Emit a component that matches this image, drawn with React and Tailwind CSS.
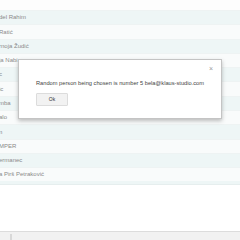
import React from "react";

const rows = [
  { t: "del Rahim", h: "h-[14px]", s: true },
  { t: "Ratić", h: "h-[15px]", s: false },
  { t: "rnoja Žudić", h: "h-[14px]", s: true },
  { t: "ja Nabi", h: "h-[14px]", s: false },
  { t: "c", h: "h-[14px]", s: true },
  { t: "ic", h: "h-[15px]", s: false },
  { t: "mba", h: "h-[14px]", s: true },
  { t: "alo", h: "h-[14px]", s: false },
  { t: "n", h: "h-[15px]", s: true },
  { t: "MPER", h: "h-[14px]", s: false },
  { t: "ermanec", h: "h-[14px]", s: true },
  { t: "a Pirš Petraković", h: "h-[14px]", s: false },
];

export default function App() {
  return (
    <div className="relative w-[240px] h-[240px] overflow-hidden bg-white flex flex-col" style={{ fontFamily: '"Liberation Sans", Arial, sans-serif' }}>
      <div className="h-[10px] bg-[#fdfdfd] shrink-0" />
      {rows.map((r, i) => (
        <div
          key={i}
          className={`${r.h} shrink-0 flex items-center text-[6px] text-[#8a8a8a] whitespace-nowrap border-t border-[#eef3f3] ${r.s ? "bg-[#eef6f6]" : "bg-[#f9fbfb]"}`}
        >
          <span className="-ml-[1px]">{r.t}</span>
        </div>
      ))}
      <div className="h-[4px] shrink-0 bg-[#eef6f6] border-b border-[#e6eeee]" />
      <div className="flex-1 bg-white" />
      <div className="h-[9px] shrink-0 bg-[#f1f1f1] border-t border-[#dcdcdc] flex items-end pl-[10px]">
        <div className="w-[2px] h-[6px] bg-[#d8d8d8]" />
      </div>

      <div className="absolute left-[18px] top-[59px] w-[204px] h-[60px] bg-white border border-[#c4c4c4] shadow-[0_2px_4px_rgba(0,0,0,0.25)]">
        <div className="absolute right-[8px] top-[5px] text-[7px] leading-none text-[#9a9a9a]">×</div>
        <div className="absolute left-[17px] top-[21px] text-[5.7px] leading-none text-[#444] whitespace-nowrap">
          Random person being chosen is number 5 bela@klaus-studio.com
        </div>
        <div className="absolute left-[17px] top-[33px] w-[32px] h-[13px] bg-[#f2f2f2] border border-[#dcdcdc] rounded-[1px] flex items-center justify-center text-[5px] text-[#333]">
          Ok
        </div>
      </div>
    </div>
  );
}
